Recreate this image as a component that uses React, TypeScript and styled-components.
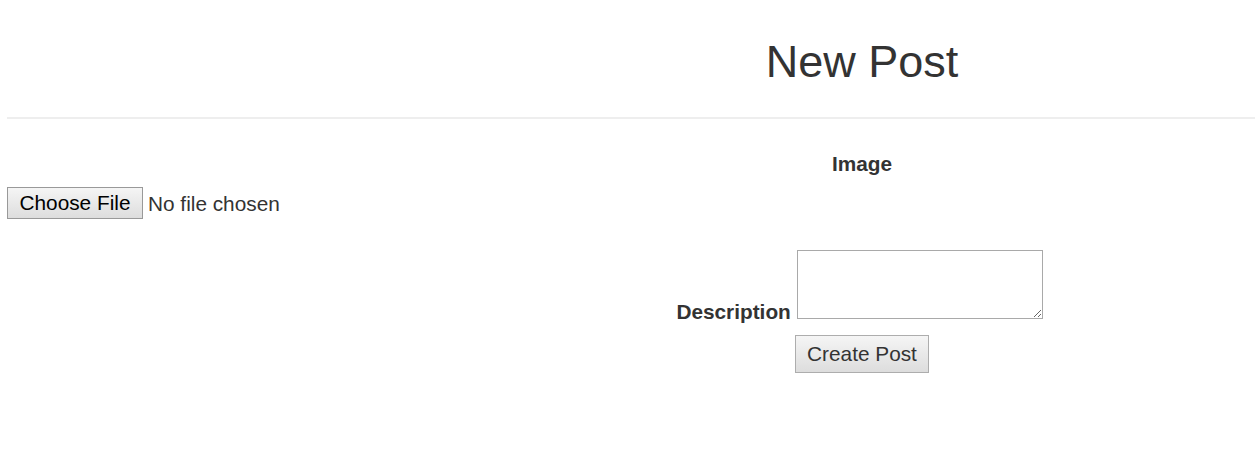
import React from "react";
import styled, { createGlobalStyle } from "styled-components";

const GlobalStyle = createGlobalStyle`
  html, body {
    margin: 0;
    padding: 0;
    background: #ffffff;
    overflow: hidden;
  }
  body {
    font-family: "Liberation Sans", Arial, Helvetica, sans-serif;
    font-size: 20.8px;
    line-height: 25px;
    color: #333333;
  }
`;

const Page = styled.div`
  width: 1710px;
  margin-left: 7px;
`;

const Title = styled.h1`
  margin: 37px 0 0;
  font-size: 45px;
  font-weight: 400;
  line-height: 50px;
  text-align: center;
  color: #333333;
`;

const Rule = styled.hr`
  margin: 30px 0 0;
  border: 0;
  border-top: 2px solid #eeeeee;
  height: 0;
`;

const Form = styled.form`
  display: flex;
  flex-direction: column;
`;

const FieldLabel = styled.label`
  display: block;
  margin-top: 32px;
  font-weight: 700;
  text-align: center;
`;

const FileRow = styled.div`
  display: flex;
  align-items: center;
  gap: 5px;
  margin-top: 11px;
  height: 32px;
`;

const NativeButton = styled.button<{ $dark?: boolean }>`
  box-sizing: border-box;
  font-family: "Liberation Sans", Arial, Helvetica, sans-serif;
  font-size: 20.8px;
  line-height: 24px;
  white-space: nowrap;
  color: ${(p) => (p.$dark ? "#000000" : "#333333")};
  background: linear-gradient(#f5f5f5, #dddddd);
  border: 1px solid #adadad;
  border-radius: 0;
  cursor: pointer;
`;

const ChooseButton = styled(NativeButton)`
  width: 136px;
  height: 32px;
  padding: 0;
  border-color: #999999;
`;

const FileText = styled.span`
  color: #333333;
  white-space: nowrap;
`;

const DescriptionRow = styled.div`
  margin-top: 29px;
  text-align: center;
  white-space: nowrap;
`;

const InlineLabel = styled.label`
  font-weight: 700;
`;

const TextArea = styled.textarea`
  box-sizing: border-box;
  width: 246px;
  height: 69px;
  margin: 2px 5px 0 0;
  vertical-align: baseline;
  border: 1px solid #a9a9a9;
  font-family: "Liberation Sans", Arial, sans-serif;
  font-size: 14px;
  padding: 2px;
`;

const SubmitRow = styled.div`
  display: flex;
  justify-content: center;
  margin-top: 11px;
`;

const SubmitButton = styled(NativeButton)`
  width: 134px;
  height: 38px;
  padding: 0;
`;

export default function App() {
  return (
    <>
      <GlobalStyle />
      <Page>
        <Title>New Post</Title>
        <Rule />
        <Form onSubmit={(e) => e.preventDefault()}>
          <FieldLabel>Image</FieldLabel>
          <FileRow>
            <ChooseButton type="button" $dark>
              Choose File
            </ChooseButton>
            <FileText>No file chosen</FileText>
          </FileRow>
          <DescriptionRow>
            <InlineLabel htmlFor="description">Description</InlineLabel>{" "}
            <TextArea id="description" />
          </DescriptionRow>
          <SubmitRow>
            <SubmitButton type="submit">Create Post</SubmitButton>
          </SubmitRow>
        </Form>
      </Page>
    </>
  );
}
